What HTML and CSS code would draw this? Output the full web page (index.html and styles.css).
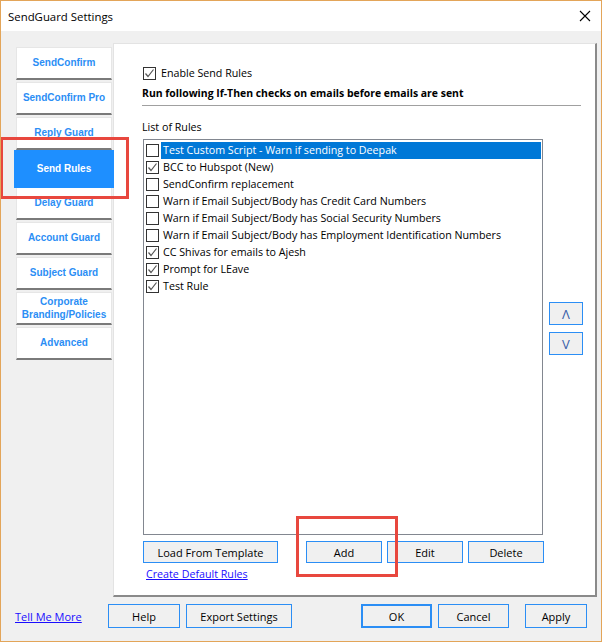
FILE: index.html
```html
<!DOCTYPE html>
<html>
<head>
<meta charset="utf-8">
<link rel="stylesheet" href="styles.css">
</head>
<body>
<div class="window">
  <div class="titlebar">
    <span class="title">SendGuard Settings</span>
    <svg class="close" width="12" height="12" viewBox="0 0 12 12"><path d="M1 1 L11 11 M11 1 L1 11" stroke="#000" stroke-width="1.1" fill="none"/></svg>
  </div>
  <div class="main">
    <div class="tabs">
      <div class="tab">SendConfirm</div>
      <div class="tab">SendConfirm Pro</div>
      <div class="tab">Reply Guard</div>
      <div class="tab active">Send Rules</div>
      <div class="tab">Delay Guard</div>
      <div class="tab">Account Guard</div>
      <div class="tab">Subject Guard</div>
      <div class="tab two">Corporate<br>Branding/Policies</div>
      <div class="tab">Advanced</div>
      <div class="mark mark-tab"></div>
    </div>
    <div class="panel">
      <div class="enable">
        <span class="cb checked"><svg viewBox="0 0 11 11" width="11" height="11"><path d="M1.5 5.5 L4 8.5 L9.5 1.5" stroke="#555" stroke-width="1.2" fill="none"/></svg></span>
        <span>Enable Send Rules</span>
      </div>
      <div class="heading">Run following If-Then checks on emails before emails are sent</div>
      <div class="sep"></div>
      <div class="label">List of Rules</div>
      <div class="listrow">
        <div class="listbox">
          <div class="item selected"><span class="cb"></span><span class="itext">Test Custom Script - Warn if sending to Deepak</span></div>
          <div class="item"><span class="cb checked"><svg viewBox="0 0 11 11" width="11" height="11"><path d="M1.5 5.5 L4 8.5 L9.5 1.5" stroke="#555" stroke-width="1.2" fill="none"/></svg></span><span class="itext">BCC to Hubspot (New)</span></div>
          <div class="item"><span class="cb"></span><span class="itext">SendConfirm replacement</span></div>
          <div class="item"><span class="cb"></span><span class="itext">Warn if Email Subject/Body has Credit Card Numbers</span></div>
          <div class="item"><span class="cb"></span><span class="itext">Warn if Email Subject/Body has Social Security Numbers</span></div>
          <div class="item"><span class="cb"></span><span class="itext">Warn if Email Subject/Body has Employment Identification Numbers</span></div>
          <div class="item"><span class="cb checked"><svg viewBox="0 0 11 11" width="11" height="11"><path d="M1.5 5.5 L4 8.5 L9.5 1.5" stroke="#555" stroke-width="1.2" fill="none"/></svg></span><span class="itext">CC Shivas for emails to Ajesh</span></div>
          <div class="item"><span class="cb checked"><svg viewBox="0 0 11 11" width="11" height="11"><path d="M1.5 5.5 L4 8.5 L9.5 1.5" stroke="#555" stroke-width="1.2" fill="none"/></svg></span><span class="itext">Prompt for LEave</span></div>
          <div class="item"><span class="cb checked"><svg viewBox="0 0 11 11" width="11" height="11"><path d="M1.5 5.5 L4 8.5 L9.5 1.5" stroke="#555" stroke-width="1.2" fill="none"/></svg></span><span class="itext">Test Rule</span></div>
        </div>
        <div class="side">
          <div class="btn arrow">Λ</div>
          <div class="btn arrow">V</div>
        </div>
      </div>
      <div class="actions">
        <div class="btn w-load">Load From Template</div>
        <div class="btn w-small add">Add</div>
        <div class="btn w-small">Edit</div>
        <div class="btn w-small">Delete</div>
        <div class="mark mark-add"></div>
      </div>
      <a class="link create" href="#">Create Default Rules</a>
    </div>
  </div>
  <div class="footer">
    <a class="link tell" href="#">Tell Me More</a>
    <div class="btn w-help">Help</div>
    <div class="btn w-export">Export Settings</div>
    <div class="spacer"></div>
    <div class="btn w-ok default">OK</div>
    <div class="btn w-ok">Cancel</div>
    <div class="btn w-apply">Apply</div>
  </div>
</div>
</body>
</html>
```
FILE: styles.css
```css
* { box-sizing: border-box; }
html, body { margin: 0; padding: 0; background: #f0f0f0; }
body { font-family: "Liberation Sans", Arial, sans-serif; font-size: 11px; color: #000; }

.window {
  width: 602px; height: 642px;
  border: 1px solid #e3a559;
  background: #f0f0f0;
  display: flex; flex-direction: column;
  overflow: hidden;
}
.titlebar {
  height: 30px; background: #fff;
  display: flex; align-items: center; justify-content: space-between;
  padding: 0 10px 0 7px;
  flex: none;
}
.title { font-family: "Open Sans", sans-serif; font-size: 11.4px; color: #000; }
.close { display: block; }

.main {
  display: flex;
  margin-top: 12px;
  height: 554px;
  flex: none;
}
.tabs {
  position: relative;
  width: 112px;
  padding: 4px 0 0 15px;
  display: flex; flex-direction: column; gap: 2px;
  flex: none;
}
.tab {
  height: 33px; width: 96px;
  background: #fff;
  border: 1px solid #e6e6e6;
  border-bottom: 2px solid #7a7a7a;
  color: #2b8ef5;
  font-family: "Liberation Sans", Arial, sans-serif;
  font-weight: bold; font-size: 10px;
  display: flex; align-items: center; justify-content: center;
  text-align: center; line-height: 14px;
}
.tab.active {
  background: #1e8fff; color: #fff;
  border: none;
  width: 100px; height: 38px;
  margin: -2px 0 -3px -2px;
  position: relative; z-index: 2;
}
.tab.two { line-height: 13px; }

.mark {
  position: absolute;
  border: 3px solid #e8473e;
  pointer-events: none;
  z-index: 3;
}
.mark-tab { left: -1px; top: 94px; width: 129px; height: 62px; }

.panel {
  position: relative;
  width: 484px; height: 554px;
  background: #fff;
  border-top: 1px solid #e3e3e3;
  border-left: 1px solid #e3e3e3;
  border-right: 2px solid #8a8a8a;
  border-bottom: 2px solid #8a8a8a;
  padding: 22px 0 0 28px;
  font-family: "Open Sans", sans-serif;
  font-size: 10.7px;
}
.cb {
  width: 13px; height: 13px;
  border: 1px solid #333;
  background: #fff;
  display: inline-flex; align-items: center; justify-content: center;
  flex: none;
}
.enable { display: flex; align-items: center; gap: 5px; height: 14px; line-height: 14px; padding-left: 1px; }
.heading { font-weight: bold; font-size: 10.45px; margin-top: 5px; height: 16px; line-height: 16px; white-space: nowrap; }
.sep { width: 439px; height: 1px; background: #a0a0a0; margin-top: 4px; }
.label { margin-top: 14px; height: 15px; line-height: 15px; }

.listrow { display: flex; margin-top: 4px; }
.listbox {
  width: 400px; height: 396px;
  border: 1px solid #828790;
  padding: 2px 1px 0 2px;
  margin-left: 1px;
}
.item { display: flex; align-items: center; height: 17px; }
.itext { margin-left: 2px; padding: 0 2px; height: 17px; line-height: 17px; white-space: nowrap; }
.item.selected .itext { background: #0078d7; color: #fff; flex: 1; }

.side { display: flex; flex-direction: column; gap: 7px; margin-left: 6px; margin-top: 163px; }

.btn {
  height: 22px;
  border: 1px solid #2b8ef5;
  background: #f0f0f0;
  display: flex; align-items: center; justify-content: center;
  font-family: "Open Sans", sans-serif; font-size: 11px; color: #000;
  flex: none;
}
.btn.arrow { width: 34px; height: 23px; color: #3a5fa8; font-size: 13px; }

.actions { position: relative; display: flex; margin-top: 6px; margin-left: 1px; }
.w-load { width: 135px; }
.w-small { width: 76px; margin-left: 5px; }
.add { margin-left: 28px; }
.mark-add { left: 153px; top: -25px; width: 102px; height: 61px; }

.link { color: #1a0dff; text-decoration: underline; font-family: "Open Sans", sans-serif; font-size: 10.7px; }
.create { display: inline-block; margin-top: 4px; margin-left: 4px; }

.footer {
  display: flex; align-items: center;
  padding: 0 14px 0 14px;
  margin-top: 7px;
  height: 24px;
}
.tell { width: 93px; font-size: 11px; }
.w-help { width: 72px; height: 24px; }
.w-export { width: 106px; margin-left: 6px; height: 24px; }
.spacer { flex: 1; }
.w-ok { width: 71px; margin-left: 6px; height: 24px; }
.w-ok.default { border-width: 2px; margin-left: 0; }
.w-apply { width: 62px; margin-left: 16px; height: 24px; }
```
